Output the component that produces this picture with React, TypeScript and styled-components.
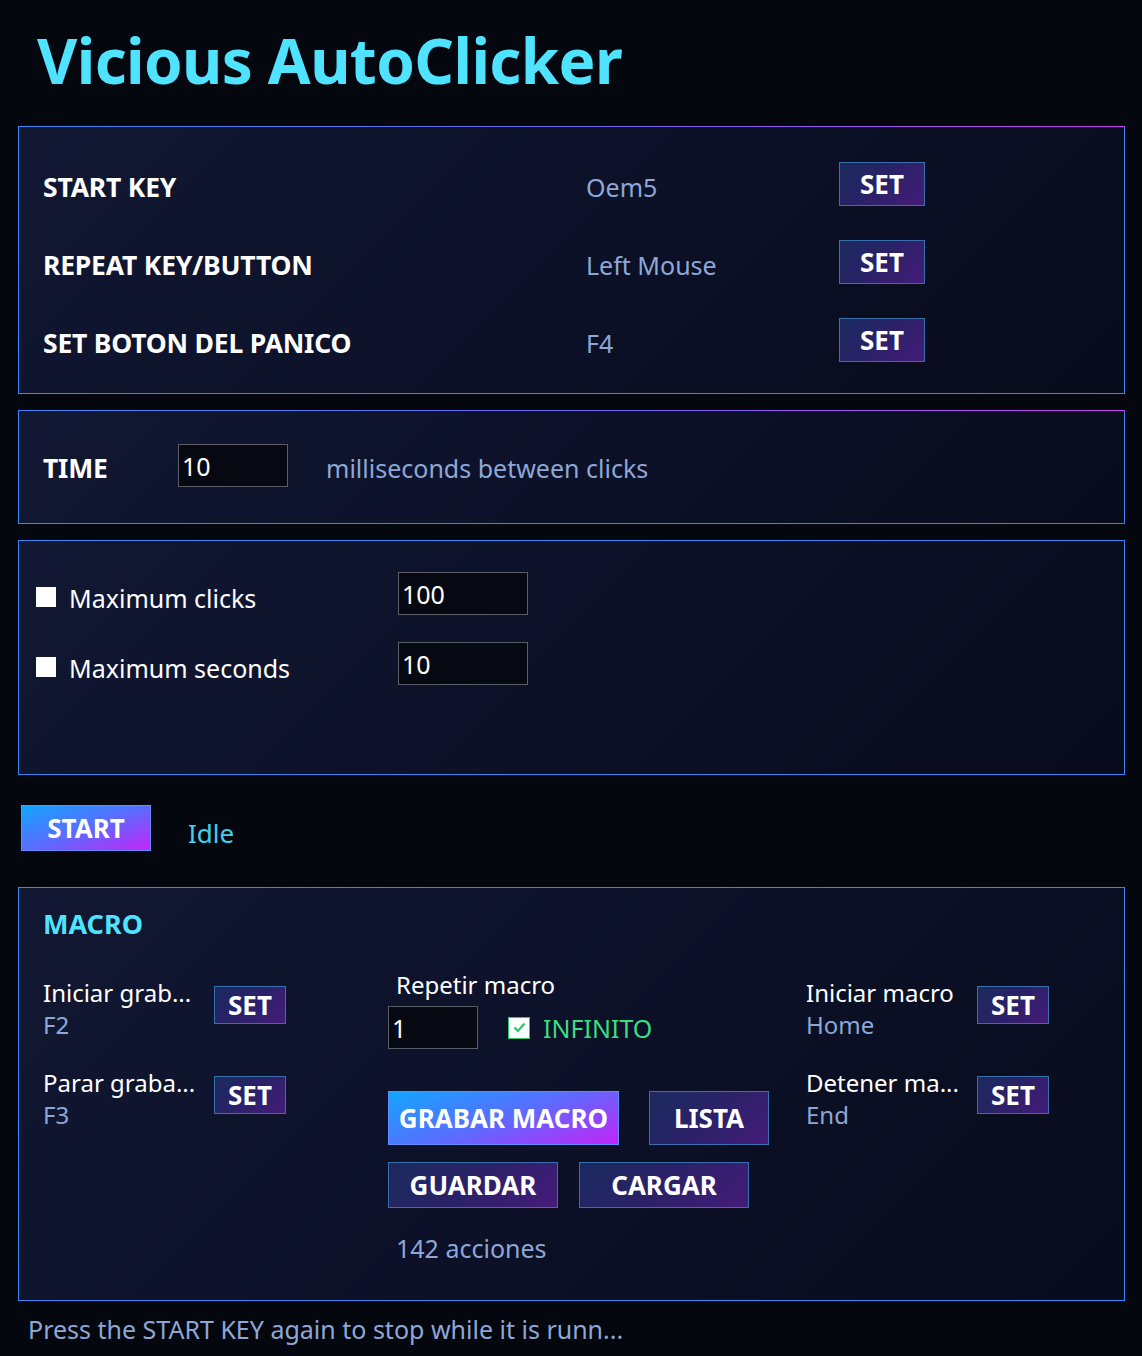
import styled, { createGlobalStyle, css } from "styled-components";

const GlobalStyle = createGlobalStyle`
  html, body {
    margin: 0;
    padding: 0;
    background: #05070f;
  }
  body {
    font-family: "Noto Sans", "Open Sans", sans-serif;
    color: #ffffff;
  }
`;

const keyRows = [
  { label: "START KEY", value: "Oem5" },
  { label: "REPEAT KEY/BUTTON", value: "Left Mouse" },
  { label: "SET BOTON DEL PANICO", value: "F4" },
];

const App = () => {
  return (
    <Page>
      <GlobalStyle />
      <Title>Vicious AutoClicker</Title>

      <Panel $pad="35px 24px 32px" $accent>
        <KeyGrid>
          {keyRows.map((row) => (
            <KeyRow key={row.label}>
              <BoldLabel>{row.label}</BoldLabel>
              <Value>{row.value}</Value>
              <SetButton $size="large">SET</SetButton>
            </KeyRow>
          ))}
        </KeyGrid>
      </Panel>

      <Panel $pad="33px 24px 36px" $accent>
        <TimeRow>
          <BoldLabel>TIME</BoldLabel>
          <Field $width={110} defaultValue="10" />
          <Value>milliseconds between clicks</Value>
        </TimeRow>
      </Panel>

      <Panel $pad="31px 17px" $minHeight={235}>
        <LimitList>
          <LimitRow>
            <Check>
              <Box />
              <PlainLabel>Maximum clicks</PlainLabel>
            </Check>
            <Field $width={130} defaultValue="100" />
          </LimitRow>
          <LimitRow>
            <Check>
              <Box />
              <PlainLabel>Maximum seconds</PlainLabel>
            </Check>
            <Field $width={130} defaultValue="10" />
          </LimitRow>
        </LimitList>
      </Panel>

      <StartRow>
        <GradientButton $w={130} $h={46}>START</GradientButton>
        <Status>Idle</Status>
      </StartRow>

      <Panel $pad="20px 24px 28px" $minHeight={414} $accent>
        <SectionTitle>MACRO</SectionTitle>
        <MacroGrid>
          <HotkeyColumn>
            <Hotkey>
              <HotkeyText>
                <HotkeyName>Iniciar grab...</HotkeyName>
                <HotkeyValue>F2</HotkeyValue>
              </HotkeyText>
              <SetButton $size="small">SET</SetButton>
            </Hotkey>
            <Hotkey>
              <HotkeyText>
                <HotkeyName>Parar graba...</HotkeyName>
                <HotkeyValue>F3</HotkeyValue>
              </HotkeyText>
              <SetButton $size="small">SET</SetButton>
            </Hotkey>
          </HotkeyColumn>

          <CenterColumn>
            <RepeatTitle>Repetir macro</RepeatTitle>
            <RepeatRow>
              <Field $width={90} defaultValue="1" />
              <Check>
                <GreenBox>
                  <svg width="13" height="11" viewBox="0 0 13 11">
                    <path d="M1.5 5.5 L5 9 L11.5 1.5" fill="none" stroke="#2fc46a" strokeWidth="2.2" />
                  </svg>
                </GreenBox>
                <Infinite>INFINITO</Infinite>
              </Check>
            </RepeatRow>
            <ButtonRow $gap={30} $top={42}>
              <GradientButton $w={231} $h={54}>GRABAR MACRO</GradientButton>
              <SetButton $size="wide" $w={120} $h={54}>LISTA</SetButton>
            </ButtonRow>
            <ButtonRow $gap={21} $top={17}>
              <SetButton $size="wide" $w={170}>GUARDAR</SetButton>
              <SetButton $size="wide" $w={170}>CARGAR</SetButton>
            </ButtonRow>
            <Count>142 acciones</Count>
          </CenterColumn>

          <HotkeyColumn>
            <Hotkey>
              <HotkeyText>
                <HotkeyName>Iniciar macro</HotkeyName>
                <HotkeyValue>Home</HotkeyValue>
              </HotkeyText>
              <SetButton $size="small">SET</SetButton>
            </Hotkey>
            <Hotkey>
              <HotkeyText>
                <HotkeyName>Detener ma...</HotkeyName>
                <HotkeyValue>End</HotkeyValue>
              </HotkeyText>
              <SetButton $size="small">SET</SetButton>
            </Hotkey>
          </HotkeyColumn>
        </MacroGrid>
      </Panel>

      <Footer>Press the START KEY again to stop while it is runn...</Footer>
    </Page>
  );
};

const Page = styled.div`
  width: 1142px;
  min-height: 1356px;
  box-sizing: border-box;
  padding: 18px 17px 0 18px;
  display: flex;
  flex-direction: column;
  gap: 16px;
`;

const Title = styled.h1`
  margin: 0 0 8px 19px;
  font-size: 62px;
  line-height: 84px;
  font-weight: 700;
  color: #4fe3ff;
  letter-spacing: -0.6px;
`;

const Panel = styled.div<{ $pad: string; $minHeight?: number; $accent?: boolean }>`
  position: relative;
  box-sizing: border-box;
  padding: ${(p) => p.$pad};
  min-height: ${(p) => (p.$minHeight ? `${p.$minHeight}px` : "auto")};
  border: 1px solid #3b86f5;
  background: linear-gradient(135deg, #121833 0%, #0c1128 50%, #080b1b 100%);

  ${(p) =>
    p.$accent &&
    css`
      border-top-color: transparent;
      &::before {
        content: "";
        position: absolute;
        left: -1px;
        right: -1px;
        top: -1px;
        height: 1px;
        background: linear-gradient(90deg, #3b86f5 0%, #6f6af2 50%, #c43cf0 100%);
      }
    `}
`;

const KeyGrid = styled.div`
  display: flex;
  flex-direction: column;
  gap: 35px;
`;

const KeyRow = styled.div`
  display: grid;
  grid-template-columns: 543px 253px auto;
  align-items: center;
  height: 43px;
`;

const BoldLabel = styled.div`
  font-size: 26.5px;
  font-weight: 700;
  color: #ffffff;
  white-space: nowrap;
  letter-spacing: -0.2px;
  padding-top: 5px;
`;

const Value = styled.div`
  font-size: 25px;
  color: #8ea7d6;
  white-space: nowrap;
  padding-top: 5px;
`;

const buttonSizes = {
  large: css`
    width: 86px;
    height: 44px;
  `,
  small: css`
    width: 72px;
    height: 38px;
  `,
  wide: css`
    height: 46px;
  `,
};

const SetButton = styled.button<{ $size: keyof typeof buttonSizes; $w?: number; $h?: number }>`
  box-sizing: border-box;
  ${(p) => buttonSizes[p.$size]}
  ${(p) => p.$w && `width: ${p.$w}px;`}
  ${(p) => p.$h && `height: ${p.$h}px;`}
  padding: 0;
  border: 1px solid #3a6fae;
  background: linear-gradient(135deg, #1a2a5e 0%, #2b2168 50%, #451c7a 100%);
  color: #ffffff;
  font-family: inherit;
  font-size: 26px;
  font-weight: 700;
  cursor: pointer;
`;

const GradientButton = styled.button<{ $w: number; $h: number }>`
  box-sizing: border-box;
  width: ${(p) => p.$w}px;
  height: ${(p) => p.$h}px;
  padding: 0;
  border: 1px solid #5f8cff;
  background: linear-gradient(160deg, #12a6ff 0%, #5a6cff 50%, #c424f6 100%);
  color: #ffffff;
  font-family: inherit;
  font-size: 26px;
  font-weight: 700;
  cursor: pointer;
`;

const TimeRow = styled.div`
  display: flex;
  align-items: center;
  height: 43px;

  > :first-child {
    width: 135px;
  }
  > :nth-child(3) {
    margin-left: 38px;
  }
`;

const Field = styled.input<{ $width: number }>`
  box-sizing: border-box;
  width: ${(p) => p.$width}px;
  height: 43px;
  padding: 0 3px;
  border: 1px solid #5b5e66;
  background: #070912;
  color: #ffffff;
  font-family: inherit;
  font-size: 25px;
  outline: none;
`;

const LimitList = styled.div`
  display: flex;
  flex-direction: column;
  gap: 27px;
`;

const LimitRow = styled.div`
  display: grid;
  grid-template-columns: 362px auto;
  align-items: center;
  height: 43px;
`;

const Check = styled.label`
  display: flex;
  align-items: center;
  gap: 13px;
`;

const Box = styled.span`
  width: 20px;
  height: 20px;
  background: #ffffff;
  margin-top: 6px;
`;

const GreenBox = styled.span`
  box-sizing: border-box;
  width: 22px;
  height: 22px;
  background: #ffffff;
  border: 1px solid #2fc46a;
  display: flex;
  align-items: center;
  justify-content: center;
`;

const PlainLabel = styled.span`
  font-size: 25px;
  color: #ffffff;
  padding-top: 8px;
`;

const StartRow = styled.div`
  display: flex;
  align-items: center;
  gap: 37px;
  margin: 14px 0 20px 3px;
`;

const Status = styled.span`
  font-size: 26px;
  color: #3fd2ea;
  padding-top: 9px;
`;

const SectionTitle = styled.div`
  font-size: 27px;
  font-weight: 700;
  color: #4fe3ff;
  line-height: 32px;
`;

const MacroGrid = styled.div`
  display: grid;
  grid-template-columns: 345px 418px auto;
  margin-top: 37px;
`;

const HotkeyColumn = styled.div`
  display: flex;
  flex-direction: column;
  gap: 26px;
`;

const Hotkey = styled.div`
  display: flex;
  align-items: center;

  > button {
    margin-top: -8px;
  }
`;

const HotkeyText = styled.div`
  width: 171px;
  display: flex;
  flex-direction: column;
`;

const HotkeyName = styled.span`
  font-size: 24px;
  line-height: 32px;
  color: #ffffff;
  white-space: nowrap;
`;

const HotkeyValue = styled.span`
  font-size: 24px;
  line-height: 32px;
  color: #8ea7d6;
`;

const CenterColumn = styled.div`
  display: flex;
  flex-direction: column;
  margin-top: -10px;
`;

const RepeatTitle = styled.div`
  font-size: 24px;
  line-height: 36px;
  margin-left: 8px;
  margin-bottom: 3px;
`;

const RepeatRow = styled.div`
  display: flex;
  align-items: center;
  gap: 30px;
`;

const Infinite = styled.span`
  font-size: 25px;
  color: #3ddc84;
`;

const ButtonRow = styled.div<{ $gap: number; $top: number }>`
  display: flex;
  gap: ${(p) => p.$gap}px;
  margin-top: ${(p) => p.$top}px;
`;

const Count = styled.div`
  margin: 23px 0 0 8px;
  font-size: 25px;
  color: #8ea7d6;
`;

const Footer = styled.div`
  margin: -5px 0 0 10px;
  font-size: 25px;
  color: #8ea7d6;
`;

export default App;
